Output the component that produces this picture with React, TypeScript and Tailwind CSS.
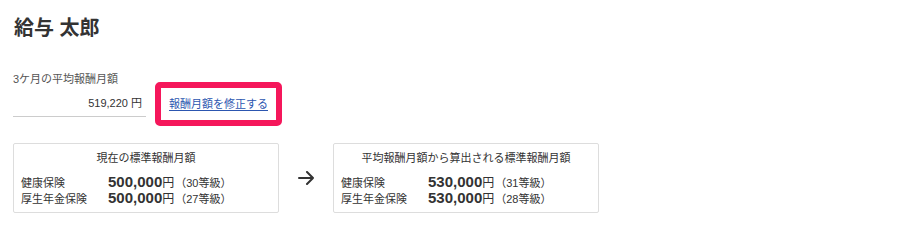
import React from 'react';

const FONT = '"Liberation Sans", "Noto Sans CJK JP", sans-serif';

type Row = { label: string; amount: string; grade: string };

const current: Row[] = [
  { label: '健康保険', amount: '500,000', grade: '30' },
  { label: '厚生年金保険', amount: '500,000', grade: '27' },
];

const computed: Row[] = [
  { label: '健康保険', amount: '530,000', grade: '31' },
  { label: '厚生年金保険', amount: '530,000', grade: '28' },
];

const GradeCard: React.FC<{ title: string; rows: Row[] }> = ({ title, rows }) => (
  <div className="w-[266px] h-[70px] border border-[#dddddd] rounded-[2px] pt-[6px] pl-[7px] pr-[7px] bg-white">
    <div className="text-center text-[11px] leading-[16px] text-[#333333]">{title}</div>
    <div className="mt-[8px]">
      {rows.map((r) => (
        <div key={r.label} className="flex items-baseline h-[16px] leading-[16px] text-[#333333]">
          <span className="w-[87px] text-[11px]">{r.label}</span>
          <span className="text-[15px] font-bold">{r.amount}</span>
          <span className="text-[12px]">円</span>
          <span className="text-[11px] ml-[1px]">（{r.grade}等級）</span>
        </div>
      ))}
    </div>
  </div>
);

export default function App() {
  return (
    <div className="w-[916px] h-[227px] bg-white pl-[13px] pt-[14px]" style={{ fontFamily: FONT }}>
      <h1 className="text-[20px] leading-[28px] font-bold text-[#333333] pl-[1px]">給与 太郎</h1>

      <div className="mt-[29px] text-[11px] leading-[16px] text-[#555555]">3ケ月の平均報酬月額</div>

      <div className="flex items-center mt-[-5px]">
        <div className="w-[133px] h-[25px] border-b border-[#cccccc] flex items-center justify-end pr-[4px] text-[11px] text-[#333333]">
          519,220 円
        </div>
        <div className="ml-[9px] w-[127px] h-[44px] border-[6px] border-[#f5175b] rounded-[5px] flex items-center justify-center">
          <a href="#" className="text-[11px] leading-[16px] text-[#2c56b0] underline underline-offset-[2px]">
            報酬月額を修正する
          </a>
        </div>
      </div>

      <div className="flex items-center mt-[17px]">
        <GradeCard title="現在の標準報酬月額" rows={current} />
        <div className="w-[54px] flex justify-center">
          <svg width="16" height="14" viewBox="0 0 16 14" fill="none" stroke="#333333" strokeWidth="2" strokeLinecap="round" strokeLinejoin="round">
            <path d="M1 7 H15 M9 1 L15 7 L9 13" />
          </svg>
        </div>
        <GradeCard title="平均報酬月額から算出される標準報酬月額" rows={computed} />
      </div>
    </div>
  );
}
